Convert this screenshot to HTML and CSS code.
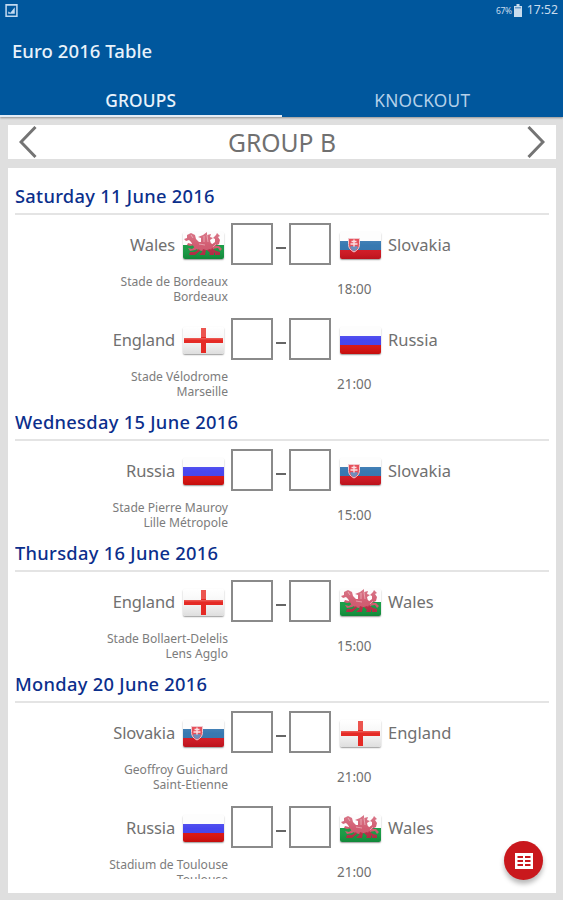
FILE: index.html
```html
<!DOCTYPE html>
<html lang="en">
<head>
<meta charset="utf-8">
<title>Euro 2016 Table</title>
<link rel="stylesheet" href="styles.css">
</head>
<body>
<svg class="defs" width="0" height="0" aria-hidden="true">
  <defs>
    <linearGradient id="shade" x1="0" y1="0" x2="0" y2="1">
      <stop offset="0" stop-color="#fff" stop-opacity=".2"/>
      <stop offset=".5" stop-color="#fff" stop-opacity=".04"/>
      <stop offset="1" stop-color="#000" stop-opacity=".12"/>
    </linearGradient>
    <symbol id="wales" viewBox="0 0 41 27">
      <path fill="#fdfdfd" d="M0 0h41v13H0z"/><path fill="#129a40" d="M0 13h41v14H0z"/>
      <g fill="#d0566c">
        <path d="M4 3l4-2 4 2 1 4 3 3 7 0 5 1 3 3 0 3-4 2-3-1-5 1-4-1-4-3-3-5-2-2-3 1-2-2 3-1z"/>
        <path d="M18 11l0-5-3-1 5-2 4-3 0 3 4-1-1 3 3 1-3 2 1 4z"/>
        <path d="M28 13l4-3 0-3-2-1 3-3 1-2 3 3-2 1 2 3-1 4-4 2 4 0 3 3-2 2-2-3-6 1z"/>
        <path d="M12 10l-3 2-4-1-1 2 3 1 5-1 2-1zM13 14l-4 3-4-1 2 3 5-1 4-2z"/>
      </g>
      <path fill="#b92943" d="M16 17l-4 3-5 0-1 3h6l5-4zM20 17l-1 3-3 3h6l1-5zM27 17l4 3 0 3h-5l1-2-3-3zM29 16l4 3 4 1 0 3h-5l0-2-4-3z"/>
      <path d="M21 4l0 6m3-7l1 7m-9 2l6 1m8 2l3-3M8 3l2 3" fill="none" stroke="#efb4be" stroke-width=".7"/>
      <path fill="url(#shade)" d="M0 0h41v27H0z"/>
    </symbol>
    <symbol id="slovakia" viewBox="0 0 41 27">
      <path fill="#fdfdfd" d="M0 0h41v9H0z"/><path fill="#2f73ae" d="M0 9h41v9H0z"/><path fill="#d4141f" d="M0 18h41v9H0z"/>
      <path fill="url(#shade)" d="M0 0h41v27H0z"/>
      <path d="M8.500 6.500h11v6q0 5-5.500 7.500-5.500-2.500-5.500-7.500z" fill="#e6505a" stroke="#f0c9d0"/>
      <path d="M14 7.500v8M11.500 9.500h5M10.500 12h7" stroke="#fbdfe2" stroke-width="1.400"/>
      <path d="M10 15q2-2 4 0 2-2 4 0-1 3-4 4-3-1-4-4z" fill="#6d8fbd"/>
    </symbol>
    <symbol id="england" viewBox="0 0 41 27">
      <linearGradient id="cloth" x1="0" y1="0" x2="0" y2="1"><stop offset="0" stop-color="#fff"/><stop offset=".5" stop-color="#f6f6f6"/><stop offset="1" stop-color="#dedede"/></linearGradient>
      <path fill="url(#cloth)" d="M0 0h41v27H0z"/>
      <path fill="#e52a25" d="M18 1h5v10h17v5H23v10h-5V16H1v-5h17z"/>
      <path fill="#f0736c" d="M18 1h5v9h-5zM1 11h39v1.500H1z" opacity=".6"/>
    </symbol>
    <symbol id="russia" viewBox="0 0 41 27">
      <path fill="#fdfdfd" d="M0 0h41v9H0z"/><path fill="#403fee" d="M0 9h41v9H0z"/><path fill="#df0f0d" d="M0 18h41v9H0z"/>
      <path fill="url(#shade)" d="M0 0h41v27H0z"/>
    </symbol>
  </defs>
</svg>

<header class="header">
  <div class="status">
    <svg class="status-image" viewBox="0 0 12 12"><path d="M1 .800h10v10.400H1z" fill="none" stroke="#c3daf0" stroke-width="1.400"/><path d="M3 9V7l2 1 4-5v6z" fill="#c3daf0"/></svg>
    <span class="status-right"><span class="percent">67%</span><svg class="battery" viewBox="0 0 8 13"><path d="M2.500 0h3v2H8v11H0V2h2.500z" fill="#c9dced"/><path d="M1 3h6v1.500H1z" fill="#6c9dca"/></svg><span class="clock">17:52</span></span>
  </div>
  <h1 class="title"><span>Euro 2016 Table</span></h1>
  <nav class="tabs">
    <div class="tab active"><span>GROUPS</span></div>
    <div class="tab"><span>KNOCKOUT</span></div>
  </nav>
</header>

<main class="content">
  <div class="group-bar">
    <svg class="arrow" viewBox="0 0 18 32"><path d="M16.500 1L2 16l14.500 15"/></svg>
    <span class="group-name">GROUP B</span>
    <svg class="arrow" viewBox="0 0 18 32"><path d="M1.500 1L16 16 1.500 31"/></svg>
  </div>

  <div class="card">
    <div class="fixtures">
      <section>
        <h2 class="date"><span>Saturday 11 June 2016</span></h2>
        <div class="match">
          <div class="teams"><span class="home">Wales</span><svg class="flag"><use href="#wales"/></svg><i class="score"></i><i class="dash"></i><i class="score away-score"></i><svg class="flag away-flag"><use href="#slovakia"/></svg><span class="away">Slovakia</span></div>
          <div class="meta"><div class="venue">Stade de Bordeaux<br>Bordeaux</div><div class="time">18:00</div></div>
        </div>
        <div class="match">
          <div class="teams"><span class="home">England</span><svg class="flag"><use href="#england"/></svg><i class="score"></i><i class="dash"></i><i class="score away-score"></i><svg class="flag away-flag"><use href="#russia"/></svg><span class="away">Russia</span></div>
          <div class="meta"><div class="venue">Stade Vélodrome<br>Marseille</div><div class="time">21:00</div></div>
        </div>
      </section>
      <section>
        <h2 class="date"><span>Wednesday 15 June 2016</span></h2>
        <div class="match">
          <div class="teams"><span class="home">Russia</span><svg class="flag"><use href="#russia"/></svg><i class="score"></i><i class="dash"></i><i class="score away-score"></i><svg class="flag away-flag"><use href="#slovakia"/></svg><span class="away">Slovakia</span></div>
          <div class="meta"><div class="venue">Stade Pierre Mauroy<br>Lille Métropole</div><div class="time">15:00</div></div>
        </div>
      </section>
      <section>
        <h2 class="date"><span>Thursday 16 June 2016</span></h2>
        <div class="match">
          <div class="teams"><span class="home">England</span><svg class="flag"><use href="#england"/></svg><i class="score"></i><i class="dash"></i><i class="score away-score"></i><svg class="flag away-flag"><use href="#wales"/></svg><span class="away">Wales</span></div>
          <div class="meta"><div class="venue">Stade Bollaert-Delelis<br>Lens Agglo</div><div class="time">15:00</div></div>
        </div>
      </section>
      <section>
        <h2 class="date"><span>Monday 20 June 2016</span></h2>
        <div class="match">
          <div class="teams"><span class="home">Slovakia</span><svg class="flag"><use href="#slovakia"/></svg><i class="score"></i><i class="dash"></i><i class="score away-score"></i><svg class="flag away-flag"><use href="#england"/></svg><span class="away">England</span></div>
          <div class="meta"><div class="venue">Geoffroy Guichard<br>Saint-Etienne</div><div class="time">21:00</div></div>
        </div>
        <div class="match">
          <div class="teams"><span class="home">Russia</span><svg class="flag"><use href="#russia"/></svg><i class="score"></i><i class="dash"></i><i class="score away-score"></i><svg class="flag away-flag"><use href="#wales"/></svg><span class="away">Wales</span></div>
          <div class="meta"><div class="venue">Stadium de Toulouse<br>Toulouse</div><div class="time">21:00</div></div>
        </div>
      </section>
    </div>
  </div>
</main>

<div class="fab">
  <svg viewBox="0 0 18 16"><path fill="#fff" fill-rule="evenodd" d="M0 0h18v16H0zM2.500 3v2h5.500V3zM10 3v2h5.500V3zM2.500 7v2h5.500V7zM10 7v2h5.500V7zM2.500 11v2h5.500v-2zM10 11v2h5.500v-2z"/></svg>
</div>
</body>
</html>
```
FILE: styles.css
```css
* { box-sizing: border-box; }
body {
  margin: 0;
  width: 563px;
  height: 900px;
  overflow: hidden;
  background: #dfdfdf;
  font-family: "Noto Sans", sans-serif;
  color: #707070;
}
.defs { position: absolute; }

.header {
  height: 117px;
  background: #00579d;
  color: #e8f2fb;
  box-shadow: 0 1px 2px rgba(0, 0, 0, .35);
}
.status {
  display: flex;
  justify-content: space-between;
  align-items: center;
  height: 20px;
  padding: 0 5px 0 5px;
  color: #c9dced;
}
.status-image { width: 13px; height: 13px; }
.status-right { display: flex; align-items: center; }
.percent { font-size: 8.500px; letter-spacing: -.3px; }
.battery { width: 8px; height: 13px; margin: 0 5px 0 2px; }
.clock { font-size: 12.200px; line-height: 20px; }
.title {
  margin: 0;
  padding-left: 12px;
  height: 62px;
  font-size: 18.500px;
  line-height: 62px;
  font-weight: 500;
  letter-spacing: .07px;
}
.tabs { display: flex; height: 35px; }
.tab {
  flex: 1;
  text-align: center;
  font-size: 17.300px;
  line-height: 37px;
  letter-spacing: .2px;
  color: #b4d0e9;
}
.tab.active {
  color: #e8f2fb;
  font-weight: 500;
  border-bottom: 2px solid #e3ecf6;
}

.content {
  display: flex;
  flex-direction: column;
  gap: 9px;
  padding: 8px 7px 0 8px;
}
.group-bar {
  display: flex;
  align-items: center;
  justify-content: space-between;
  height: 34px;
  padding: 0 11px;
  background: #fff;
}
.arrow {
  width: 18px;
  height: 32px;
  fill: none;
  stroke: #747474;
  stroke-width: 3;
}
.group-name { font-size: 24.700px; line-height: 34px; padding-top: 2px; }

.card {
  height: 725px;
  padding: 11px 7px 14px;
  background: #fff;
}
.fixtures { height: 700px; overflow: hidden; }
.date {
  margin: 0;
  height: 36px;
  border-bottom: 2px solid #e4e4e4;
  font-size: 18.300px;
  line-height: 34px;
  font-weight: 500;
  letter-spacing: .3px;
  color: #0b2f8c;
}
.match { height: 95px; padding-top: 8px; }
.teams {
  display: grid;
  grid-template-columns: 160px 8px 40px 8px 42px 16px 42px 9px 40px 8px 1fr;
  height: 42px;
  align-items: center;
}
.teams > * { grid-row: 1; }
.home, .away { font-size: 16.500px; line-height: 43px; height: 42px; }
.home { grid-column: 1; text-align: right; letter-spacing: -.15px; }
.away { grid-column: 11; }
.flag {
  grid-column: 3;
  width: 41px;
  height: 27px;
  margin-top: 2px;
  border-radius: 2px;
  box-shadow: 0 1px 1.500px rgba(0, 0, 0, .4);
}
.away-flag { grid-column: 9; }
.score { grid-column: 5; width: 42px; height: 42px; border: 2px solid #8a8a8a; }
.away-score { grid-column: 7; }
.dash { grid-column: 6; justify-self: center; width: 10px; height: 2px; margin-top: 7px; background: #666; }
.meta { display: flex; margin-top: 8px; }
.venue {
  width: 213px;
  padding-top: 1px;
  text-align: right;
  font-size: 12.100px;
  line-height: 15px;
  color: #7c7c7c;
}
.time { margin-left: 109px; font-size: 13.500px; line-height: 32px; height: 30px; }

.fab {
  position: absolute;
  left: 504px;
  top: 841px;
  display: flex;
  align-items: center;
  justify-content: center;
  width: 39px;
  height: 39px;
  border-radius: 50%;
  background: #c9181d;
  box-shadow: 0 4px 5px rgba(0, 0, 0, .28);
}
.fab svg { width: 18px; height: 16px; }
```
